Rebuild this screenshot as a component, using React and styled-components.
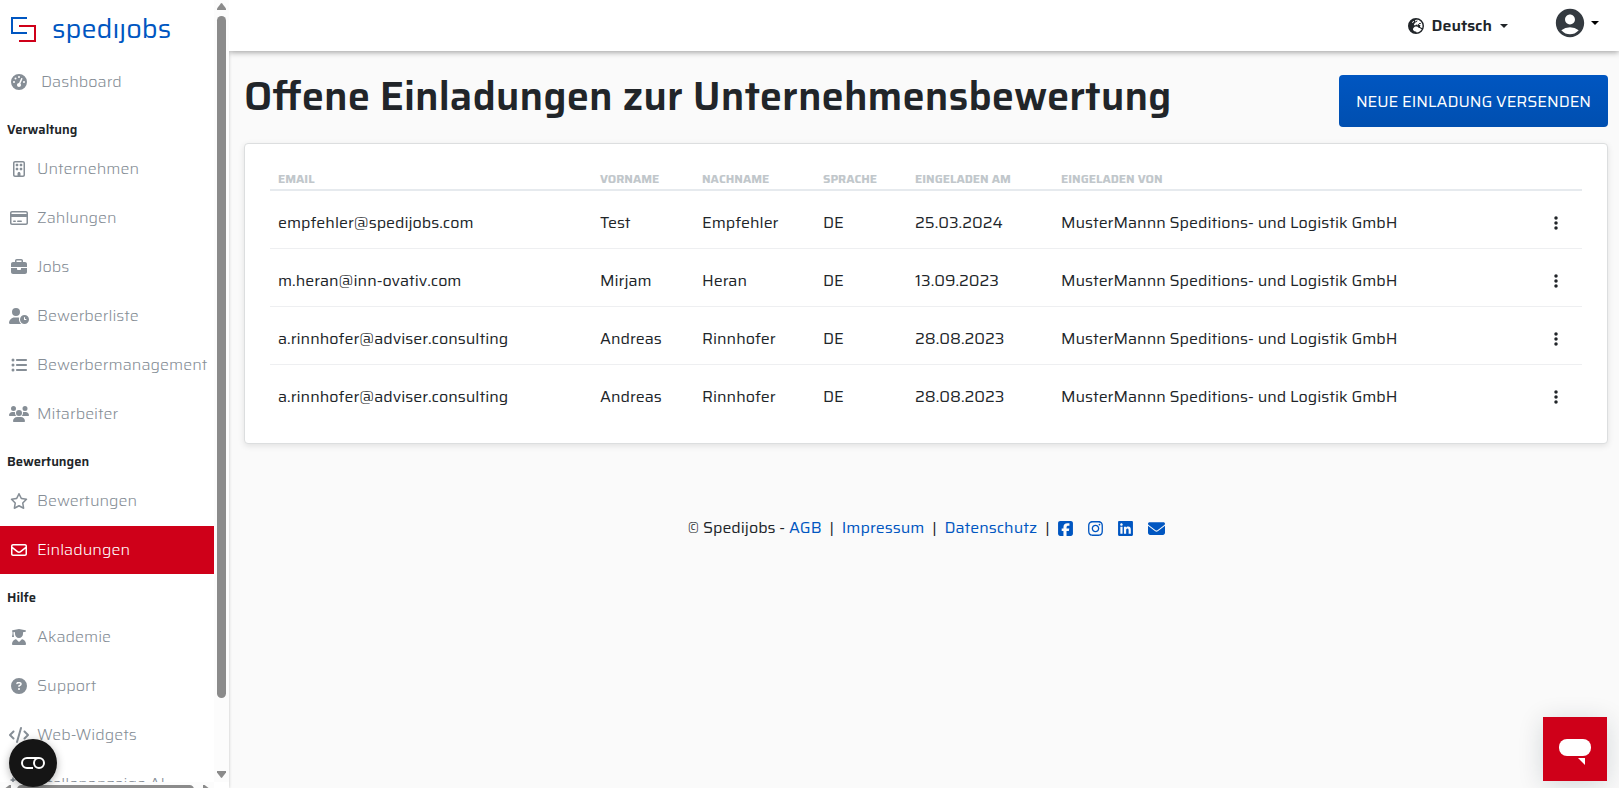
import React from 'react';
import styled, { createGlobalStyle, css } from 'styled-components';
import {
  FaGaugeHigh, FaRegBuilding, FaRegCreditCard, FaBriefcase, FaUserClock, FaListUl, FaUsers,
  FaRegStar, FaRegEnvelope, FaUserGraduate, FaCircleQuestion, FaCode, FaWandMagicSparkles,
  FaEarthEurope, FaSquareFacebook, FaInstagram, FaLinkedin, FaEnvelope, FaEllipsisVertical,
} from 'react-icons/fa6';
import { MdAccountCircle } from 'react-icons/md';

const blue = '#0056c1';
const red = '#cf0019';
const ink = '#212529';
const muted = '#868e96';
const thumb = '#8b8b8b';

const GlobalStyle = createGlobalStyle`
  *, *::before, *::after { box-sizing: border-box; }
  body {
    margin: 0;
    background: #fafafa;
    color: ${ink};
    font: 400 16px/24px "Saira", "Open Sans", "Noto Sans", sans-serif;
  }
  a { color: ${blue}; text-decoration: none; }
  button { font: inherit; color: inherit; background: none; border: 0; padding: 0; cursor: pointer; }
`;

const Shell = styled.div`
  display: flex;
  min-height: 100vh;
`;

const Sidebar = styled.aside`
  position: sticky;
  top: 0;
  flex: none;
  width: 229px;
  height: 100vh;
  display: grid;
  grid-template: minmax(0, 1fr) 6px / minmax(0, 1fr) 15px;
  background: #fff;
  box-shadow: 0 0 3px rgba(0, 0, 0, 0.22);
`;

const SidebarContent = styled.div`
  overflow: hidden;
`;

const Track = styled.div`
  display: flex;
  align-items: center;
  overflow: hidden;
  background: #fcfcfc;
  ${({ $vertical }) => $vertical
    ? css`flex-direction: column; padding: 3px 0 4px; gap: 6px;`
    : css`align-items: flex-start; padding: 3px 4px 0; gap: 6px;`}
`;

const Thumb = styled.div`
  flex: none;
  border-radius: 5px;
  background: ${thumb};
  ${({ $vertical }) => $vertical
    ? css`width: 9px; height: 88%; margin-bottom: auto;`
    : css`height: 9px; width: 177px; margin-right: auto;`}
`;

const Arrow = styled.svg`
  flex: none;
  fill: ${thumb};
`;

const Logo = styled.a`
  display: flex;
  align-items: center;
  gap: 16px;
  height: 58px;
  padding: 0 11px;
  color: ${blue};
  font-size: 27px;
  line-height: 32px;
`;

const Nav = styled.nav`
  display: flex;
  flex-direction: column;
  gap: 1px;
`;

const NavHeading = styled.h2`
  margin: 0;
  padding: 9px 7px 0;
  height: 37px;
  font-size: 13px;
  font-weight: 600;
  line-height: 28px;
`;

const NavLink = styled.a`
  flex: none;
  display: flex;
  align-items: center;
  gap: ${({ $wide }) => ($wide ? 12 : 8)}px;
  height: 48px;
  padding: 0 9px;
  font-weight: 300;
  white-space: nowrap;
  color: ${({ $active }) => ($active ? '#fff' : muted)};
  background: ${({ $active }) => ($active ? red : 'transparent')};
  svg { flex: none; width: 20px; height: 16px; }
`;

const Page = styled.div`
  flex: 1;
  min-width: 0;
`;

const Topbar = styled.header`
  display: flex;
  justify-content: flex-end;
  align-items: center;
  gap: 45px;
  height: 51px;
  padding: 0 20px;
  background: #fff;
  box-shadow: 0 1px 6px rgba(0, 0, 0, 0.4);
  clip-path: inset(0 0 -12px 0);
`;

const MenuButton = styled.button`
  display: flex;
  align-items: center;
  gap: 8px;
  font-weight: 600;
`;

const AccountButton = styled(MenuButton)`
  gap: 4px;
  padding-bottom: 5px;
  color: #343a40;
`;

const Caret = styled.span`
  border: solid transparent;
  border-width: 4px 4px 0;
  border-top-color: ${({ $black }) => ($black ? '#000' : ink)};
`;

const Main = styled.main`
  padding: 24px 11px 0 15px;
`;

const TitleRow = styled.div`
  display: flex;
  justify-content: space-between;
  align-items: flex-start;
  gap: 24px;
`;

const Title = styled.h1`
  margin: 0;
  font-size: 40px;
  font-weight: 600;
  line-height: 44px;
`;

const PrimaryButton = styled.button`
  flex: none;
  height: 52px;
  padding: 2px 17px 0;
  border-radius: 4px;
  color: #fff;
  text-transform: uppercase;
  background: linear-gradient(#0056c1, #004fb0);
`;

const Card = styled.section`
  margin-top: 16px;
  padding: 25px 25px 20px;
  border: 1px solid #dcdedf;
  border-radius: 4px;
  background: #fff;
  box-shadow: 0 2px 6px rgba(0, 0, 0, 0.1);
`;

const Table = styled.table`
  width: 100%;
  table-layout: fixed;
  border-collapse: separate;
  border-spacing: 0;
  text-align: left;
`;

const Col = styled.col`
  width: ${({ $w }) => $w}px;
`;

const HeadCell = styled.th`
  height: 22px;
  padding: 0 8px;
  border-bottom: 2px solid #e6eaee;
  color: #c1c7cb;
  font-size: 12px;
  font-weight: 700;
  line-height: 20px;
  text-transform: uppercase;
  white-space: nowrap;
`;

const Cell = styled.td`
  height: 58px;
  padding: 6px 8px 0;
  border-bottom: 1px solid #eeeff1;
  white-space: nowrap;
  tr:last-child & { border-bottom-color: transparent; }
`;

const RowMenu = styled.button`
  display: flex;
  justify-content: center;
  width: 20px;
`;

const Footer = styled.footer`
  display: flex;
  justify-content: center;
  align-items: center;
  gap: 4px;
  padding: 72px 0 24px;
`;

const Legal = styled.span`
  a { margin-right: 4px; }
`;

const Bar = styled.span`
  padding: 0 4px;
`;

const Socials = styled.span`
  display: flex;
  align-items: center;
  gap: 15px;
  a { display: flex; }
  svg { width: 15px; height: 17px; }
  a:last-child svg { width: 17px; }
`;

const CookieButton = styled.button`
  position: fixed;
  left: 9px;
  bottom: 1px;
  display: grid;
  place-items: center;
  width: 48px;
  height: 48px;
  border-radius: 50%;
  background: #151515;
  box-shadow: 0 2px 8px rgba(0, 0, 0, 0.3);
`;

const ChatButton = styled.button`
  position: fixed;
  right: 12px;
  bottom: 7px;
  width: 64px;
  height: 64px;
  background: ${red};
  box-shadow: 0 4px 26px rgba(0, 40, 50, 0.16);
  svg { display: block; }
`;

const groups = [
  { items: [['Dashboard', FaGaugeHigh]] },
  {
    title: 'Verwaltung',
    items: [
      ['Unternehmen', FaRegBuilding],
      ['Zahlungen', FaRegCreditCard],
      ['Jobs', FaBriefcase],
      ['Bewerberliste', FaUserClock],
      ['Bewerbermanagement', FaListUl],
      ['Mitarbeiter', FaUsers],
    ],
  },
  { title: 'Bewertungen', items: [['Bewertungen', FaRegStar], ['Einladungen', FaRegEnvelope]] },
  {
    title: 'Hilfe',
    items: [
      ['Akademie', FaUserGraduate],
      ['Support', FaCircleQuestion],
      ['Web-Widgets', FaCode],
      ['Stellenanzeige AI', FaWandMagicSparkles],
    ],
  },
];

const company = 'MusterMannn Speditions- und Logistik GmbH';
const columns = [
  ['Email', 322], ['Vorname', 102], ['Nachname', 121], ['Sprache', 92], ['Eingeladen am', 146], ['Eingeladen von'],
];
const invitations = [
  ['empfehler@spedijobs.com', 'Test', 'Empfehler', 'DE', '25.03.2024', company],
  ['m.heran@inn-ovativ.com', 'Mirjam', 'Heran', 'DE', '13.09.2023', company],
  ['a.rinnhofer@adviser.consulting', 'Andreas', 'Rinnhofer', 'DE', '28.08.2023', company],
  ['a.rinnhofer@adviser.consulting', 'Andreas', 'Rinnhofer', 'DE', '28.08.2023', company],
];

function SideNavigation() {
  return (
    <Sidebar>
      <SidebarContent>
        <Logo href="#" aria-label="spedijobs">
          <svg width="25" height="25" viewBox="0 0 25 25" fill="none" strokeWidth="2">
            <path d="M16 1H1v15h15" stroke={blue} />
            <path d="M8 9h16v15H8" stroke={red} />
          </svg>
          <span>spedıȷobs</span>
        </Logo>
        <Nav>
          {groups.map(({ title, items }) => (
            <React.Fragment key={title || 'start'}>
              {title && <NavHeading>{title}</NavHeading>}
              {items.map(([label, Icon]) => (
                <NavLink key={label} href="#" $active={label === 'Einladungen'} $wide={label === 'Dashboard'}>
                  <Icon />
                  {label}
                </NavLink>
              ))}
            </React.Fragment>
          ))}
        </Nav>
      </SidebarContent>
      <Track $vertical>
        <Arrow width="9" height="7" viewBox="0 0 9 7"><path d="M3.8.4q.7-.7 1.4 0L9 5.4V7H0V5.4z" /></Arrow>
        <Thumb $vertical />
        <Arrow width="9" height="7" viewBox="0 0 9 7"><path d="M3.8 6.6q.7.7 1.4 0L9 1.6V0H0v1.6z" /></Arrow>
      </Track>
      <Track>
        <Arrow width="7" height="9" viewBox="0 0 7 9"><path d="M.4 3.8q-.7.7 0 1.4L5.4 9H7V0H5.4z" /></Arrow>
        <Thumb />
        <Arrow width="7" height="9" viewBox="0 0 7 9"><path d="M6.6 3.8q.7.7 0 1.4L1.6 9H0V0h1.6z" /></Arrow>
      </Track>
    </Sidebar>
  );
}

function InvitationTable() {
  return (
    <Table>
      <colgroup>
        {columns.map(([name, width]) => (width ? <Col key={name} $w={width} /> : <col key={name} />))}
        <Col $w={44} />
      </colgroup>
      <thead>
        <tr>
          {columns.map(([name]) => <HeadCell key={name} scope="col">{name}</HeadCell>)}
          <HeadCell as="td" />
        </tr>
      </thead>
      <tbody>
        {invitations.map((row, r) => (
          <tr key={r}>
            {row.map((value, c) => <Cell key={c}>{value}</Cell>)}
            <Cell><RowMenu aria-label="Aktionen"><FaEllipsisVertical /></RowMenu></Cell>
          </tr>
        ))}
      </tbody>
    </Table>
  );
}

export default function App() {
  return (
    <>
      <GlobalStyle />
      <Shell>
        <SideNavigation />
        <Page>
          <Topbar>
            <MenuButton><FaEarthEurope size={16} />Deutsch<Caret /></MenuButton>
            <AccountButton aria-label="Konto"><MdAccountCircle size={34} /><Caret $black /></AccountButton>
          </Topbar>
          <Main>
            <TitleRow>
              <Title>Offene Einladungen zur Unternehmensbewertung</Title>
              <PrimaryButton>Neue Einladung versenden</PrimaryButton>
            </TitleRow>
            <Card><InvitationTable /></Card>
            <Footer>
              <Legal>
                © Spedijobs - <a href="#">AGB</a><Bar>|</Bar> <a href="#">Impressum</a><Bar>|</Bar> <a href="#">Datenschutz</a><Bar>|</Bar>
              </Legal>
              <Socials>
                <a href="#" aria-label="Facebook"><FaSquareFacebook /></a>
                <a href="#" aria-label="Instagram"><FaInstagram /></a>
                <a href="#" aria-label="LinkedIn"><FaLinkedin /></a>
                <a href="#" aria-label="E-Mail"><FaEnvelope /></a>
              </Socials>
            </Footer>
          </Main>
        </Page>
      </Shell>
      <CookieButton aria-label="Cookie-Einstellungen">
        <svg width="26" height="14" viewBox="0 0 26 14" fill="none" stroke="#fff" strokeWidth="2">
          <path d="M13 12H7A5 5 0 0 1 7 2h12" />
          <circle cx="19" cy="7" r="5" />
        </svg>
      </CookieButton>
      <ChatButton aria-label="Chat öffnen">
        <svg width="64" height="64" viewBox="0 0 64 64" fill="#fff">
          <rect x="16" y="22" width="32" height="17" rx="8" />
          <path d="M35 41h7v7z" />
        </svg>
      </ChatButton>
    </>
  );
}
